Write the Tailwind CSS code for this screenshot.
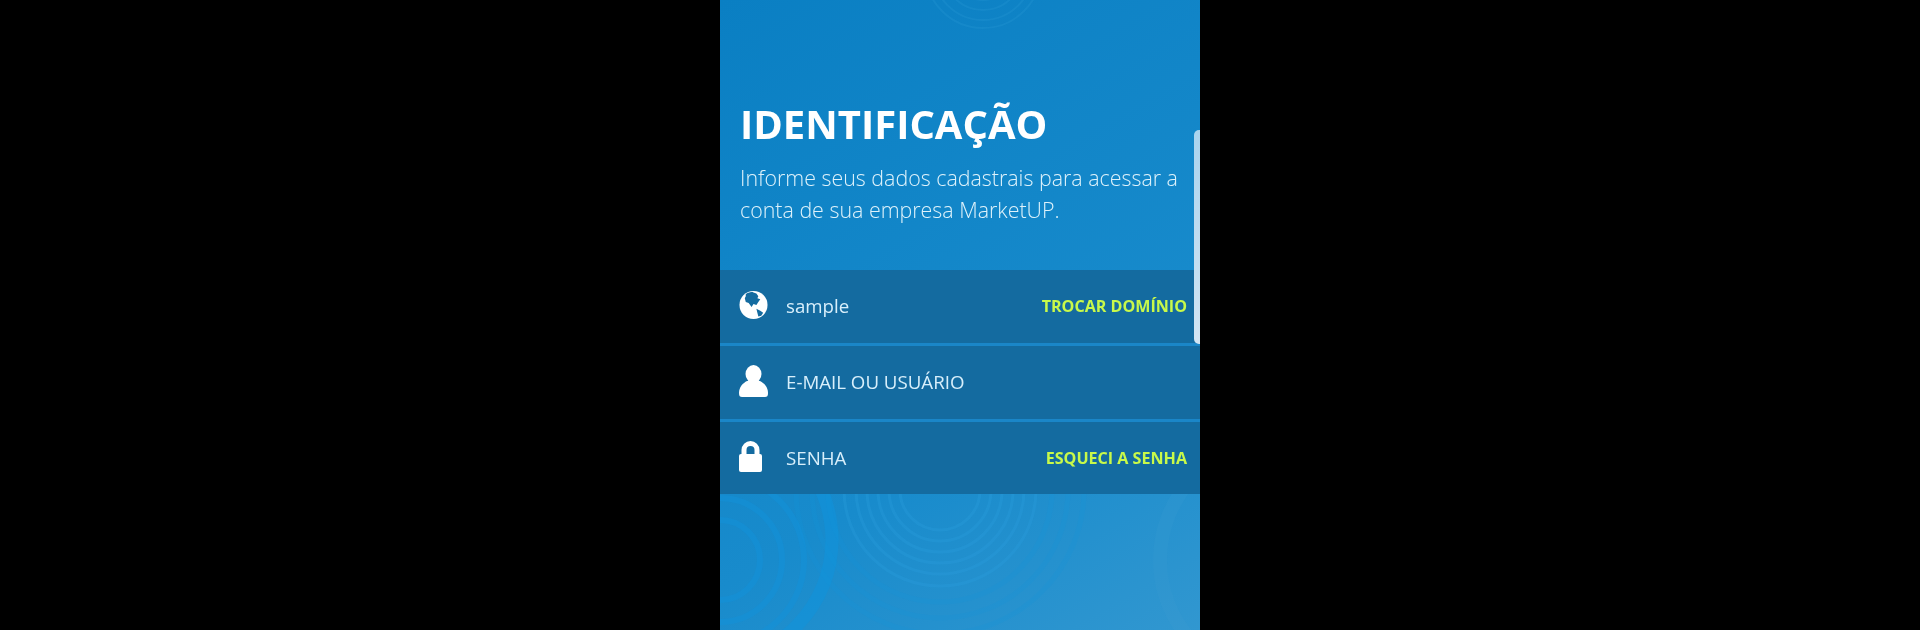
<!DOCTYPE html>
<html lang="pt">
<head>
    <meta charset="UTF-8">
    <title>Identificação</title>
    <script src="https://cdn.jsdelivr.net/npm/@tailwindcss/browser@4"></script>
</head>
<body class="bg-black h-[630px] overflow-hidden flex justify-center font-['Open_Sans',sans-serif]">
<div class="relative w-[480px] h-[630px] overflow-hidden bg-linear-[150deg] from-[#0a7fc3] via-[#188bcc] via-65% to-[#3197d0] blur-[0.6px]">
    <!-- aneis do fundo -->
    <svg class="absolute inset-0" width="480" height="630" fill="none" stroke="#1193db" stroke-opacity="0.45">
        <g stroke-width="6">
            <circle cx="0" cy="560" r="40"/><circle cx="0" cy="560" r="62"/><circle cx="0" cy="560" r="84"/>
        </g>
        <circle cx="-10" cy="540" r="122" stroke-width="13" stroke-opacity="0.6"/>
        <g stroke-width="3" stroke="#2a9fdf" stroke-opacity="0.3">
            <circle cx="220" cy="490" r="40"/><circle cx="220" cy="490" r="51"/><circle cx="220" cy="490" r="62"/><circle cx="220" cy="490" r="73"/><circle cx="220" cy="490" r="84"/><circle cx="220" cy="490" r="96"/>
        </g>
        <g stroke-width="5" stroke-opacity="0.18">
            <circle cx="220" cy="490" r="112"/><circle cx="220" cy="490" r="128"/><circle cx="220" cy="490" r="144"/>
        </g>
        <g stroke-width="2" stroke="#2a9ad8" stroke-opacity="0.25">
            <circle cx="263" cy="-30" r="30"/><circle cx="263" cy="-30" r="40"/><circle cx="263" cy="-30" r="50"/><circle cx="263" cy="-30" r="58"/>
        </g>
        <circle cx="560" cy="560" r="120" stroke="#4aa8da" stroke-width="14" stroke-opacity="0.1"/>
    </svg>
    <!-- barra lateral -->
    <div class="absolute z-10 right-0 top-[130px] w-[6px] h-[214px] rounded-l-[5px] bg-linear-to-b from-[#a9d3ee] to-[#d3e5f3]"></div>

    <div class="relative pt-[99px]">
        <div class="px-[20px]">
            <h1 class="text-[40px] leading-[50px] font-bold text-white">IDENTIFICAÇÃO</h1>
            <p class="mt-[13px] text-[21.4px] leading-[32px] font-light text-[#def2fb] whitespace-nowrap">Informe seus dados cadastrais para acessar a<br>conta de sua empresa MarketUP.</p>
        </div>
        <div class="mt-[44px] bg-[#146ba0] text-[#d8effb] text-[18.7px]">
            <div class="h-[76px] pl-[19px] pr-[13px] flex items-center border-b-[3px] border-[#1a86c8]">
                <svg class="w-[29px] h-[30px] mb-[3px] shrink-0" viewBox="0 0 30 30">
                    <circle cx="15" cy="15" r="14.5" fill="#fff"/>
                    <path d="M7 4c2-2 6-3 8-2l3 1 2 3-1 2 3 1-2 3-2 3-3-1-2 3-3-4-3-1-1-4 1-2z" fill="#146ba0"/>
                    <path d="M18 19l4 2 3 2-2 3-3 1-1-4z" fill="#146ba0"/>
                </svg>
                <span class="ml-[18px]">sample</span>
                <span class="ml-auto text-[16.1px] font-bold text-[#c8f94a]">TROCAR DOMÍNIO</span>
            </div>
            <div class="h-[76px] pl-[19px] pr-[13px] flex items-center border-b-[3px] border-[#1a86c8]">
                <svg class="w-[29px] h-[32px] mb-[3px] shrink-0" viewBox="0 0 29 32">
                    <ellipse cx="14.5" cy="9" rx="8" ry="9" fill="#fff"/>
                    <path d="M3 32c-2 0-3-1-3-4 0-6 4-10 8-12h13c4 2 8 6 8 12 0 3-1 4-3 4z" fill="#fff"/>
                </svg>
                <span class="ml-[18px]">E-MAIL OU USUÁRIO</span>
            </div>
            <div class="h-[72px] pl-[19px] pr-[13px] flex items-center">
                <svg class="w-[29px] h-[32px] mb-[5px] shrink-0" viewBox="0 0 29 32">
                    <path d="M5 16V10a6.5 6.5 0 0 1 13 0v6" fill="none" stroke="#fff" stroke-width="5"/>
                    <rect x="0" y="14" width="23" height="18" rx="2" fill="#fff"/>
                </svg>
                <span class="ml-[18px]">SENHA</span>
                <span class="ml-auto text-[16.1px] font-bold text-[#c8f94a]">ESQUECI A SENHA</span>
            </div>
        </div>
    </div>
</div>
</body>
</html>
